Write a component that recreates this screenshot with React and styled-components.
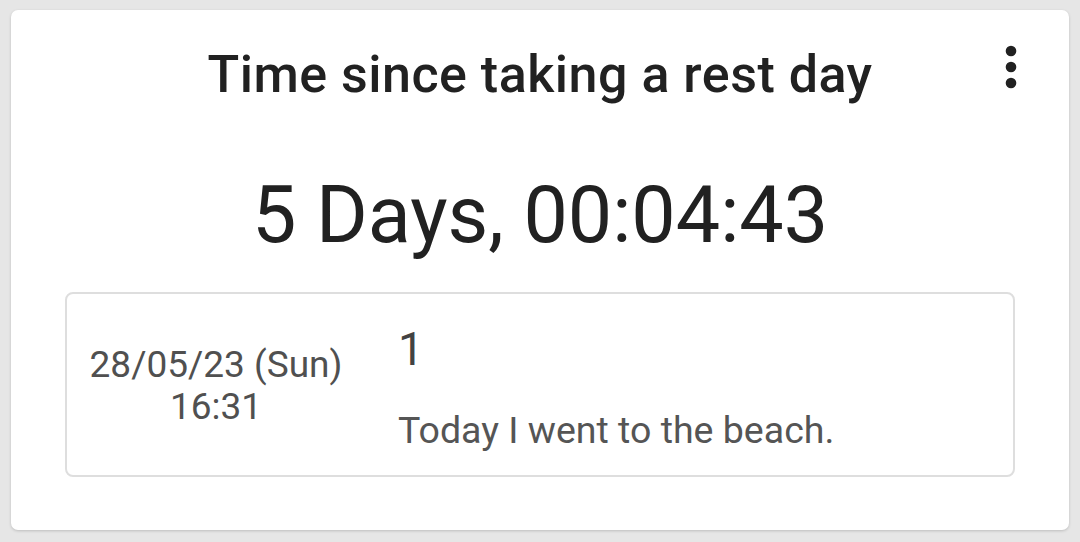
import React from 'react';
import styled, { createGlobalStyle } from 'styled-components';

const GlobalStyle = createGlobalStyle`
  html, body {
    margin: 0;
    padding: 0;
    background: #e6e6e6;
    font-family: Roboto, "Noto Sans", Arial, sans-serif;
  }
`;

const Page = styled.div`
  padding: 10px 11px 12px 11px;
  height: 542px;
  box-sizing: border-box;
`;

const Card = styled.div`
  position: relative;
  background: #fff;
  border-radius: 7px;
  height: 520px;
  box-sizing: border-box;
  box-shadow: 0 1px 3px rgba(0, 0, 0, 0.18);
  padding: 35px 52px 0 52px;
  display: flex;
  flex-direction: column;
  align-items: stretch;
`;

const Title = styled.h1`
  margin: 0;
  font-size: 52px;
  line-height: 60px;
  letter-spacing: 0.5px;
  font-weight: 500;
  color: #212121;
  text-align: center;
`;

const MenuButton = styled.button`
  position: absolute;
  top: 25px;
  right: 26px;
  width: 64px;
  height: 64px;
  padding: 0;
  border: none;
  background: transparent;
  color: #212121;
  display: flex;
  align-items: center;
  justify-content: center;
`;

const Elapsed = styled.div`
  margin-top: 71px;
  font-size: 79px;
  line-height: 79px;
  font-weight: 400;
  color: #212121;
  text-align: center;
`;

const Entry = styled.div`
  margin: 37px 2px 0 2px;
  border: 2px solid #dedede;
  border-radius: 8px;
  height: 185px;
  box-sizing: border-box;
  display: grid;
  grid-template-columns: 298px 1fr;
  padding-top: 28px;
`;

const DateCol = styled.div`
  padding-top: 22px;
  text-align: center;
  font-size: 37px;
  line-height: 42px;
  color: #505050;
`;

const BodyCol = styled.div`
  padding-left: 33px;
  display: flex;
  flex-direction: column;
`;

const Count = styled.div`
  font-size: 46px;
  line-height: 54px;
  color: #424242;
`;

const Note = styled.div`
  margin-top: 32px;
  font-size: 37.5px;
  line-height: 44px;
  color: #555;
`;

function MoreVert() {
  return (
    <svg width="64" height="64" viewBox="0 0 24 24" fill="currentColor">
      <circle cx="12" cy="6" r="2" />
      <circle cx="12" cy="12" r="2" />
      <circle cx="12" cy="18" r="2" />
    </svg>
  );
}

export default function App() {
  return (
    <Page>
      <GlobalStyle />
      <Card>
        <Title>Time since taking a rest day</Title>
        <MenuButton aria-label="More options">
          <MoreVert />
        </MenuButton>
        <Elapsed>5 Days, 00:04:43</Elapsed>
        <Entry>
          <DateCol>
            28/05/23 (Sun)
            <br />
            16:31
          </DateCol>
          <BodyCol>
            <Count>1</Count>
            <Note>Today I went to the beach.</Note>
          </BodyCol>
        </Entry>
      </Card>
    </Page>
  );
}
